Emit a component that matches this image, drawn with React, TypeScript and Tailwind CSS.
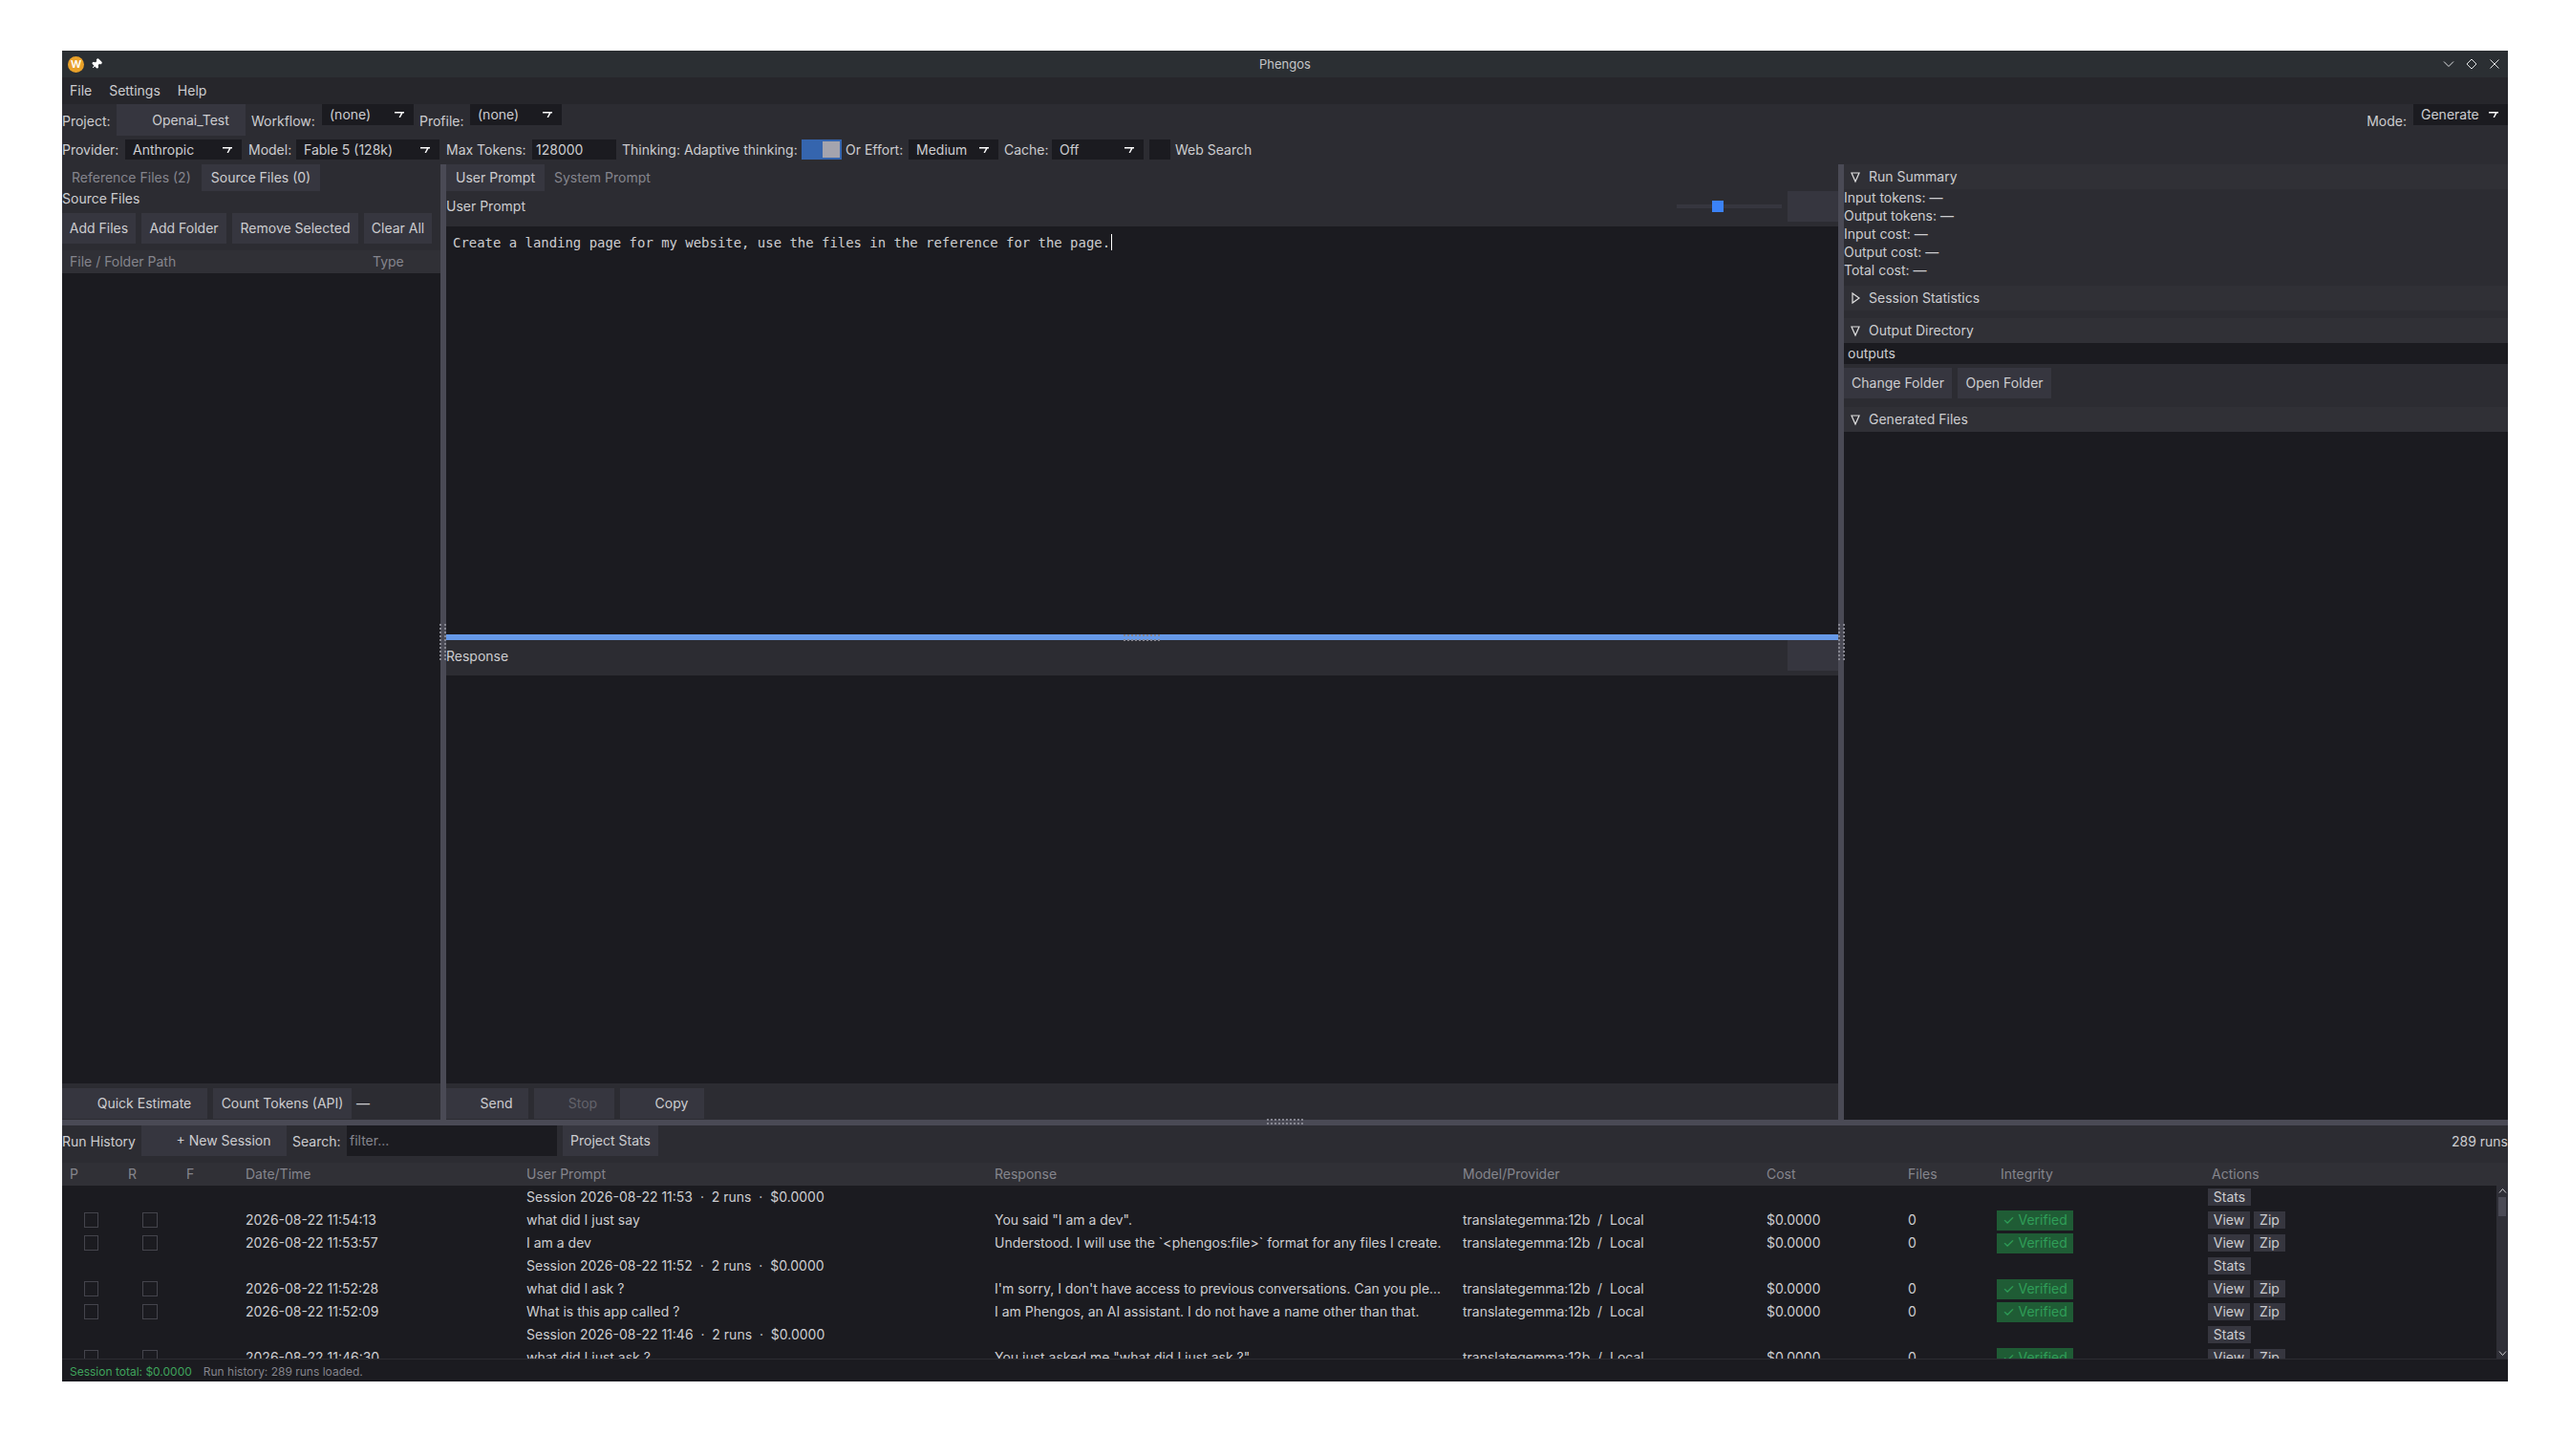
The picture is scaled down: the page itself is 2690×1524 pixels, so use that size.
import { Pin } from 'lucide-react'

function ComboArrow() {
  return (
    <svg aria-hidden="true" className="h-[6px] w-[10px] shrink-0 text-white" viewBox="0 0 10 6" fill="currentColor">
      <path d="M0 0h10v1.5H8.5L6 6H4.5L6.8 1.5H0z" />
    </svg>
  )
}

function Combo({ label, className }: { label: string; className: string }) {
  return (
    <div className={`flex h-[22px] items-center justify-between bg-[#1b1b20] pl-2 pr-[10px] ${className}`}>
      <span>{label}</span>
      <ComboArrow />
    </div>
  )
}

function Btn({ children, className = '' }: { children: React.ReactNode; className?: string }) {
  return <div className={`flex items-center justify-center bg-[#36363f] ${className}`}>{children}</div>
}

function Grip({
  className,
  cols,
  rows,
  xStep = 4,
  yStep = 4,
}: {
  className: string
  cols: number
  rows: number
  xStep?: number
  yStep?: number
}) {
  const dots = []
  for (let c = 0; c < cols; c++) {
    for (let r = 0; r < rows; r++) {
      dots.push(<rect key={`${c}-${r}`} x={c * xStep} y={r * yStep} width="2" height="2" />)
    }
  }
  return (
    <svg
      aria-hidden="true"
      className={`absolute text-[#85858f] ${className}`}
      width={(cols - 1) * xStep + 2}
      height={(rows - 1) * yStep + 2}
      fill="currentColor"
    >
      {dots}
    </svg>
  )
}

function SectionHeader({ title, open = true }: { title: string; open?: boolean }) {
  return (
    <div className="flex h-[26px] items-center bg-[#303036] pl-[5px]">
      <svg aria-hidden="true" className="h-[14px] w-[14px] text-[#e0e0e0]" viewBox="0 0 14 14" fill="none" stroke="currentColor" strokeWidth="1.2">
        {open ? <path d="M3 3h8L7 12z" /> : <path d="M4 2l7 5-7 5z" />}
      </svg>
      <span className="ml-[7px]">{title}</span>
    </div>
  )
}

const gridCols = 'grid-cols-[69px_61px_62px_294px_490px_490px_318px_148px_97px_217px_1fr]'

type Run = { date: string; prompt: string; response: string }
type Row = { session: string } | Run

const rows: Row[] = [
  { session: 'Session 2026-08-22 11:53  ·  2 runs  ·  $0.0000' },
  { date: '2026-08-22 11:54:13', prompt: 'what did I just say', response: 'You said "I am a dev".' },
  { date: '2026-08-22 11:53:57', prompt: 'I am a dev', response: 'Understood. I will use the `<phengos:file>` format for any files I create.' },
  { session: 'Session 2026-08-22 11:52  ·  2 runs  ·  $0.0000' },
  { date: '2026-08-22 11:52:28', prompt: 'what did I ask ?', response: "I'm sorry, I don't have access to previous conversations. Can you ple..." },
  { date: '2026-08-22 11:52:09', prompt: 'What is this app called ?', response: 'I am Phengos, an AI assistant. I do not have a name other than that.' },
  { session: 'Session 2026-08-22 11:46  ·  2 runs  ·  $0.0000' },
  { date: '2026-08-22 11:46:30', prompt: 'what did I just ask ?', response: 'You just asked me "what did I just ask ?"' },
]

function HistoryRow({ row }: { row: Row }) {
  if ('session' in row) {
    return (
      <div className={`grid h-6 shrink-0 items-center ${gridCols}`}>
        <span className="col-start-5 whitespace-pre">{row.session}</span>
        <div className="col-start-11 flex">
          <Btn className="h-[18px] w-[45px]">Stats</Btn>
        </div>
      </div>
    )
  }
  return (
    <div className={`grid h-6 shrink-0 items-center ${gridCols}`}>
      <div className="pl-[23px]">
        <div className="h-4 w-[15px] border border-[#44444c]" />
      </div>
      <div className="pl-[15px]">
        <div className="h-4 w-4 border border-[#44444c]" />
      </div>
      <div />
      <span>{row.date}</span>
      <span>{row.prompt}</span>
      <span className="whitespace-nowrap">{row.response}</span>
      <span className="whitespace-pre">translategemma:12b  /  Local</span>
      <span>$0.0000</span>
      <span>0</span>
      <div className="-ml-1">
        <div className="flex h-[21px] w-20 items-center justify-center bg-[#1f5c35] text-[#2f9e58]">✓ Verified</div>
      </div>
      <div className="flex gap-1">
        <Btn className="h-[18px] w-11">View</Btn>
        <Btn className="h-[18px] w-[33px]">Zip</Btn>
      </div>
    </div>
  )
}

export default function App() {
  return (
    <div className="h-[1524px] w-[2690px] bg-white px-[65px] pt-[53px] font-['Inter',sans-serif] text-[14px] leading-none text-[#cdcdd0]">
      <div className="flex h-[1393px] w-[2560px] flex-col overflow-hidden bg-[#2c2c32]">
        {/* title bar */}
        <div className="relative flex h-7 shrink-0 items-center bg-[#2b2f33] pl-[6px] pr-[8px]">
          <div className="flex h-[17px] w-[17px] items-center justify-center rounded-full bg-[#e9a12a] text-[11px] font-semibold text-white">W</div>
          <Pin className="ml-[7px] h-[12px] w-[12px] rotate-45 fill-white text-white" />
          <span className="absolute inset-x-0 text-center text-[13px] text-[#c4c6c8]">Phengos</span>
          <div className="ml-auto flex items-center gap-[12px] text-[#dfe1e3]">
            <svg aria-hidden="true" width="12" height="12" viewBox="0 0 12 12" fill="none" stroke="currentColor"><path d="M1 3.5l5 5 5-5" /></svg>
            <svg aria-hidden="true" width="12" height="12" viewBox="0 0 12 12" fill="none" stroke="currentColor"><path d="M6 1l5 5-5 5-5-5z" /></svg>
            <svg aria-hidden="true" width="12" height="12" viewBox="0 0 12 12" fill="none" stroke="currentColor"><path d="M1.5 1.5l9 9M10.5 1.5l-9 9" /></svg>
          </div>
        </div>

        {/* menu */}
        <div className="flex h-7 shrink-0 items-center gap-[18px] bg-[#26262b] pl-2">
          <span>File</span>
          <span>Settings</span>
          <span>Help</span>
        </div>

        {/* toolbar one */}
        <div className="flex h-[37px] shrink-0 items-start">
          <span className="mt-[11px] w-[57px]">Project:</span>
          <Btn className="h-[33px] w-[135px] pl-[20px]">Openai_Test</Btn>
          <span className="ml-[6px] mt-[11px] w-[74px]">Workflow:</span>
          <Combo label="(none)" className="w-[96px]" />
          <span className="ml-[6px] mt-[11px] w-[53px]">Profile:</span>
          <Combo label="(none)" className="w-[96px]" />
          <span className="ml-auto mr-[7px] mt-[11px]">Mode:</span>
          <Combo label="Generate" className="w-[99px]" />
        </div>

        {/* toolbar two */}
        <div className="flex h-[26px] shrink-0 items-start">
          <div className="flex h-[21px] items-center">
            <span className="w-[66px]">Provider:</span>
            <Combo label="Anthropic" className="!h-[21px] w-[122px]" />
            <span className="ml-[7px] w-[50px]">Model:</span>
            <Combo label="Fable 5 (128k)" className="!h-[21px] w-[150px]" />
            <span className="ml-[7px] w-[90px]">Max Tokens:</span>
            <div className="flex h-[21px] w-[88px] items-center bg-[#1b1b20] pl-[4px]">128000</div>
            <span className="ml-[6px] w-[188px] whitespace-nowrap">Thinking: Adaptive thinking:</span>
            <div className="flex h-[21px] w-[42px] items-center justify-end bg-[#3565ae] pr-[2px]">
              <div className="h-[17px] w-[18px] bg-[#a4a4ae]" />
            </div>
            <span className="ml-1 w-[66px]">Or Effort:</span>
            <Combo label="Medium" className="!h-[21px] w-[94px]" />
            <span className="ml-[6px] w-[50px]">Cache:</span>
            <Combo label="Off" className="!h-[21px] w-[96px]" />
            <div className="ml-[6px] h-[21px] w-[22px] bg-[#1b1b20]" />
            <span className="ml-[5px]">Web Search</span>
          </div>
        </div>

        {/* main panels */}
        <div className="flex h-[1000px] shrink-0">
          {/* left */}
          <div className="flex w-[396px] shrink-0 flex-col">
            <div className="flex h-7 shrink-0 items-center">
              <span className="w-[146px] pl-[10px] text-[#85858d]">Reference Files (2)</span>
              <div className="flex h-7 w-[124px] items-center justify-center bg-[#36363f]">Source Files (0)</div>
            </div>
            <div className="flex h-[23px] shrink-0 items-start pt-[1px]">Source Files</div>
            <div className="flex h-8 shrink-0 gap-[6px]">
              <Btn className="w-[77px]">Add Files</Btn>
              <Btn className="w-[89px]">Add Folder</Btn>
              <Btn className="w-[132px]">Remove Selected</Btn>
              <Btn className="w-[71px]">Clear All</Btn>
            </div>
            <div className="mt-[7px] flex h-6 shrink-0 items-center bg-[#303036] pl-2 text-[#85858d]">
              <span className="w-[317px]">File / Folder Path</span>
              <span>Type</span>
            </div>
            <div className="min-h-0 flex-1 bg-[#1b1b20]" />
            <div className="flex h-[38px] shrink-0 items-start gap-[6px] pt-[5px]">
              <Btn className="h-8 w-[152px] pl-[20px]">Quick Estimate</Btn>
              <Btn className="h-8 w-[145px]">Count Tokens (API)</Btn>
              <span className="-ml-[1px] mt-[9px]">—</span>
            </div>
          </div>

          {/* vertical splitter */}
          <div className="relative w-[6px] shrink-0 bg-[#4a4a55]">
            <Grip className="left-[-1px] top-[481px]" cols={2} rows={10} xStep={5} />
          </div>

          {/* centre */}
          <div className="flex w-[1457px] shrink-0 flex-col">
            <div className="flex h-7 shrink-0 items-center">
              <div className="flex h-7 w-[103px] items-center justify-center bg-[#36363f]">User Prompt</div>
              <span className="ml-[10px] text-[#85858d]">System Prompt</span>
            </div>
            <div className="flex h-[37px] shrink-0 items-start bg-[#2c2c32]">
              <span className="mt-[9px]">User Prompt</span>
              <div className="ml-auto mt-[10px] flex h-3 w-[110px] items-center">
                <div className="relative h-1 w-full bg-[#36363f]">
                  <div className="absolute left-[37px] top-[-4px] h-3 w-3 bg-[#3b82f6]" />
                </div>
              </div>
              <div className="ml-[6px] h-8 w-[53px] bg-[#36363f]" />
            </div>
            <div className="h-[427px] shrink-0 bg-[#1b1b20] pl-[7px] pr-[6px] pt-[5px] font-['DejaVu_Sans_Mono',monospace] text-[13.95px] leading-[20px]">
              Create a landing page for my website, use the files in the reference for the page.<span className="ml-px inline-block h-[17px] w-px translate-y-[3px] bg-white" />
            </div>
            <div className="relative h-[6px] shrink-0 bg-[#6699e8]">
              <Grip className="left-[709px] top-0" cols={10} rows={2} yStep={5} />
            </div>
            <div className="flex h-[37px] shrink-0 items-start bg-[#2c2c32]">
              <span className="mt-[10px]">Response</span>
              <div className="ml-auto h-8 w-[53px] bg-[#36363f]" />
            </div>
            <div className="min-h-0 flex-1 bg-[#1b1b20]" />
            <div className="flex h-[38px] shrink-0 items-start gap-[6px] pt-[5px]">
              <Btn className="h-8 w-[86px] pl-[19px]">Send</Btn>
              <Btn className="h-8 w-[84px] pl-[18px] text-[#63636b]">Stop</Btn>
              <Btn className="h-8 w-[88px] pl-[20px]">Copy</Btn>
            </div>
          </div>

          {/* vertical splitter */}
          <div className="relative w-[6px] shrink-0 bg-[#4a4a55]">
            <Grip className="left-0 top-[481px]" cols={2} rows={10} xStep={5} />
          </div>

          {/* right */}
          <div className="flex min-w-0 flex-1 flex-col">
            <SectionHeader title="Run Summary" />
            <div className="flex h-[101px] shrink-0 flex-col justify-start gap-[5px] pt-[2px]">
              <span className="h-[14px]">Input tokens: —</span>
              <span className="h-[14px]">Output tokens: —</span>
              <span className="h-[14px]">Input cost: —</span>
              <span className="h-[14px]">Output cost: —</span>
              <span className="h-[14px]">Total cost: —</span>
            </div>
            <SectionHeader title="Session Statistics" open={false} />
            <div className="h-2 shrink-0" />
            <SectionHeader title="Output Directory" />
            <div className="flex h-[22px] shrink-0 items-center bg-[#1b1b20] pl-1">outputs</div>
            <div className="mt-1 flex h-8 shrink-0 gap-[6px]">
              <Btn className="w-[113px]">Change Folder</Btn>
              <Btn className="w-[98px]">Open Folder</Btn>
            </div>
            <div className="h-[9px] shrink-0" />
            <SectionHeader title="Generated Files" />
            <div className="min-h-0 flex-1 bg-[#1b1b20]" />
          </div>
        </div>

        {/* horizontal splitter */}
        <div className="relative h-[6px] shrink-0 bg-[#4a4a55]">
          <Grip className="left-[1261px] top-[-1px]" cols={10} rows={2} />
        </div>

        {/* run history */}
        <div className="flex h-[39px] shrink-0 items-start">
          <span className="mt-[10px] w-[83px]">Run History</span>
          <Btn className="h-8 w-[152px] pl-[20px]">+ New Session</Btn>
          <span className="ml-[6px] mt-[10px] w-[57px]">Search:</span>
          <div className="flex h-8 w-[220px] items-center bg-[#1b1b20] pl-[3px] text-[#85858d]">filter...</div>
          <Btn className="ml-[6px] h-8 w-[100px]">Project Stats</Btn>
          <span className="ml-auto mt-[10px] whitespace-nowrap">289 runs</span>
        </div>

        <div className={`grid h-6 shrink-0 items-center bg-[#303036] text-[#85858d] ${gridCols}`}>
          <span className="pl-2">P</span>
          <span>R</span>
          <span>F</span>
          <span>Date/Time</span>
          <span>User Prompt</span>
          <span>Response</span>
          <span>Model/Provider</span>
          <span>Cost</span>
          <span>Files</span>
          <span>Integrity</span>
          <span className="pl-1">Actions</span>
        </div>

        <div className="flex h-[181px] shrink-0 bg-[#1b1b20]">
          <div className="flex min-w-0 flex-1 flex-col overflow-hidden">
            {rows.map((row, i) => (
              <HistoryRow key={i} row={row} />
            ))}
          </div>
          <div className="flex w-3 shrink-0 flex-col items-center bg-[#2f2f37] text-[#c9c9cc]">
            <svg aria-hidden="true" className="mt-[2px]" width="9" height="7" viewBox="0 0 9 7" fill="none" stroke="currentColor"><path d="M1 5.5l3.5-4 3.5 4" /></svg>
            <div className="mt-[3px] h-5 w-2 bg-[#4a4a55]" />
            <svg aria-hidden="true" className="mb-[2px] mt-auto" width="9" height="7" viewBox="0 0 9 7" fill="none" stroke="currentColor"><path d="M1 1.5l3.5 4 3.5-4" /></svg>
          </div>
        </div>

        {/* status bar */}
        <div className="flex h-6 shrink-0 items-center border-t border-[#2c2c32] bg-[#1b1b20] pb-[-1px] pl-2 pt-[2px] text-[12px]">
          <span className="text-[#3fa35c]">Session total: $0.0000</span>
          <span className="ml-[12px] text-[#85858d]">Run history: 289 runs loaded.</span>
        </div>
      </div>
    </div>
  )
}
